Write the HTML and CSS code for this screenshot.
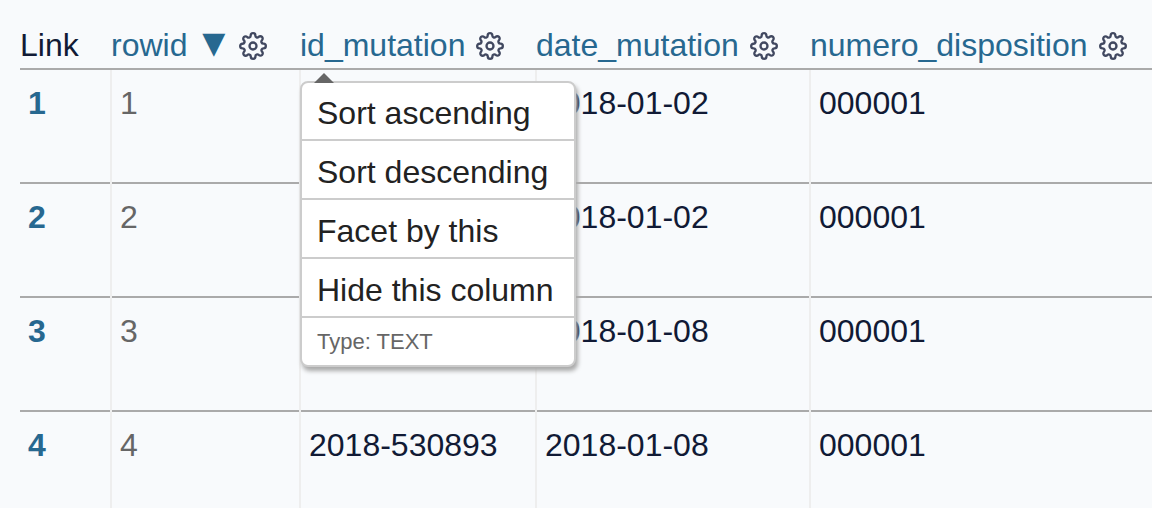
FILE: index.html
```html
<!DOCTYPE html>
<html lang="en">
<head>
<meta charset="utf-8">
<title>Mutations</title>
<link rel="stylesheet" href="styles.css">
</head>
<body>
<svg class="sprite" aria-hidden="true">
  <symbol id="cog" viewBox="0 0 24 24">
    <circle cx="12" cy="12" r="3"/>
    <path d="M19.4 15a1.65 1.65 0 0 0 .33 1.82l.06.06a2 2 0 0 1 0 2.83 2 2 0 0 1-2.83 0l-.06-.06a1.65 1.65 0 0 0-1.82-.33 1.65 1.65 0 0 0-1 1.51V21a2 2 0 0 1-2 2 2 2 0 0 1-2-2v-.09A1.65 1.65 0 0 0 9 19.4a1.65 1.65 0 0 0-1.82.33l-.06.06a2 2 0 0 1-2.83 0 2 2 0 0 1 0-2.83l.06-.06a1.65 1.65 0 0 0 .33-1.82 1.65 1.65 0 0 0-1.51-1H3a2 2 0 0 1-2-2 2 2 0 0 1 2-2h.09A1.65 1.65 0 0 0 4.6 9a1.65 1.65 0 0 0-.33-1.82l-.06-.06a2 2 0 0 1 0-2.83 2 2 0 0 1 2.83 0l.06.06a1.65 1.65 0 0 0 1.82.33H9a1.65 1.65 0 0 0 1-1.51V3a2 2 0 0 1 2-2 2 2 0 0 1 2 2v.09a1.65 1.65 0 0 0 1 1.51 1.65 1.65 0 0 0 1.82-.33l.06-.06a2 2 0 0 1 2.83 0 2 2 0 0 1 0 2.83l-.06.06a1.65 1.65 0 0 0-.33 1.82V9a1.65 1.65 0 0 0 1.51 1H21a2 2 0 0 1 2 2 2 2 0 0 1-2 2h-.09a1.65 1.65 0 0 0-1.51 1z"/>
  </symbol>
</svg>
<main class="page">
  <table class="rows">
    <colgroup>
      <col class="col-link"><col class="col-rowid"><col class="col-id"><col class="col-date"><col>
    </colgroup>
    <thead>
      <tr>
        <th scope="col"><div class="head">Link</div></th>
        <th scope="col"><div class="head"><a class="sort" href="#rowid">rowid <span class="arrow">▼</span></a><button class="cog" type="button" aria-label="rowid options"><svg><use href="#cog"/></svg></button></div></th>
        <th scope="col">
          <div class="head"><a href="#id_mutation">id_mutation</a><button class="cog" type="button" aria-label="id_mutation options" aria-expanded="true"><svg><use href="#cog"/></svg></button>
            <div class="menu">
              <ul class="menu-list">
                <li><a href="#asc">Sort ascending</a></li>
                <li><a href="#desc">Sort descending</a></li>
                <li><a href="#facet">Facet by this</a></li>
                <li><a href="#hide">Hide this column</a></li>
              </ul>
              <p class="menu-type">Type: TEXT</p>
            </div>
          </div>
        </th>
        <th scope="col"><div class="head"><a href="#date_mutation">date_mutation</a><button class="cog" type="button" aria-label="date_mutation options"><svg><use href="#cog"/></svg></button></div></th>
        <th scope="col"><div class="head"><a href="#numero_disposition">numero_disposition</a><button class="cog" type="button" aria-label="numero_disposition options"><svg><use href="#cog"/></svg></button></div></th>
      </tr>
    </thead>
    <tbody>
      <tr><td><a class="pk" href="#1">1</a></td><td class="muted">1</td><td></td><td>2018-01-02</td><td>000001</td></tr>
      <tr><td><a class="pk" href="#2">2</a></td><td class="muted">2</td><td></td><td>2018-01-02</td><td>000001</td></tr>
      <tr><td><a class="pk" href="#3">3</a></td><td class="muted">3</td><td></td><td>2018-01-08</td><td>000001</td></tr>
      <tr><td><a class="pk" href="#4">4</a></td><td class="muted">4</td><td>2018-530893</td><td>2018-01-08</td><td>000001</td></tr>
    </tbody>
  </table>
</main>
</body>
</html>
```
FILE: styles.css
```css
body {
  margin: 0;
  background: #f8fafc;
  color: #111a35;
  font: 32px/48px "Liberation Sans", Arial, sans-serif;
}

a {
  color: #276890;
  text-decoration: none;
}

.sprite {
  position: absolute;
  width: 0;
  height: 0;
}

.page {
  padding: 22px 0 0 20px;
}

.rows {
  width: 100%;
  border-collapse: collapse;
  table-layout: fixed;
}

.col-link { width: 91px; }
.col-rowid { width: 189px; }
.col-id { width: 236px; }
.col-date { width: 274px; }

th {
  padding: 0;
  font-weight: normal;
  text-align: left;
}

td {
  height: 95px;
  padding: 9px 8px 8px;
  border-top: 2px solid #aaa;
  border-left: 2px solid #eee;
  vertical-align: top;
}

td:first-child {
  border-left: 0;
}

.head {
  position: relative;
  display: flex;
  align-items: center;
  gap: 11px;
  line-height: 46px;
  white-space: nowrap;
}

.arrow {
  margin: 0 3px 0 6px;
  font-family: "DejaVu Sans", sans-serif;
  font-size: 30px;
  line-height: 32px;
  vertical-align: 3px;
}

.cog {
  display: flex;
  padding: 2px 0 0;
  border: 0;
  background: none;
  color: #414860;
}

.cog svg {
  width: 28px;
  height: 28px;
  fill: none;
  stroke: currentColor;
  stroke-width: 2;
  stroke-linecap: round;
  stroke-linejoin: round;
}

.pk {
  font-weight: bold;
}

.muted {
  color: #666;
}

.menu {
  position: absolute;
  z-index: 1;
  top: 59px;
  left: 0;
  border: 2px solid #ccc;
  border-radius: 8px;
  background: #fff;
  box-shadow: 2px 4px 4px #aaa;
  line-height: 41px;
}

.menu::before {
  content: "";
  position: absolute;
  top: -10px;
  left: 12px;
  border: solid transparent;
  border-width: 0 10px 10px;
  border-bottom-color: #666;
}

.menu-list {
  margin: 0;
  padding: 0;
  list-style: none;
}

.menu-list li {
  border-bottom: 2px solid #ccc;
}

.menu-list a {
  display: block;
  padding: 11px 20px 5px 15px;
  color: #222;
}

.menu-list li:first-child a {
  padding-top: 10px;
}

.menu-type {
  margin: 0;
  padding: 8px 15px;
  color: #666;
  font-size: 22px;
  line-height: 31px;
}
```
